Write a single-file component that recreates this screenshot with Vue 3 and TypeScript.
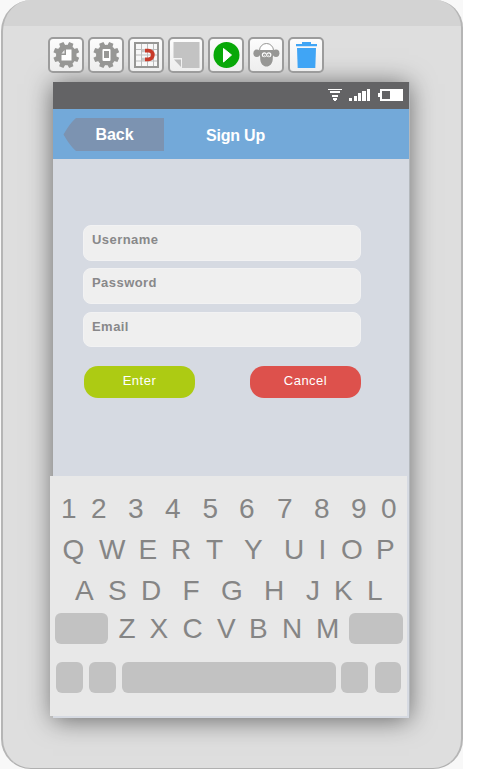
<script setup lang="ts">
interface KeyRow {
  name: string
  keys: string
  // left edge of every key, measured from the keyboard's left side
  starts: number[]
}

const tools: string[] = ['page', 'device', 'grid', 'note', 'play', 'monkey', 'trash']
const teeth: number[] = [0, 45, 90, 135, 180, 225, 270, 315]
const fields: string[] = ['Username', 'Password', 'Email']

const rows: KeyRow[] = [
  { name: 'digits', keys: '1234567890', starts: [11, 41, 78, 115, 152.5, 189, 227, 264, 301, 331] },
  { name: 'upper', keys: 'QWERTYUIOP', starts: [12.5, 49, 88.5, 121, 156, 194, 234, 268.5, 291, 326] },
  { name: 'home', keys: 'ASDFGHJKL', starts: [25, 58, 91, 132.5, 171, 214, 256, 284, 317] },
]
const lower: KeyRow = { name: 'lower', keys: 'ZXCVBNM', starts: [10.5, 41.5, 74.5, 109, 141, 174, 208] }

function columns(row: KeyRow): string {
  return row.starts
    .map((start, i) => (i + 1 < row.starts.length ? `${row.starts[i + 1] - start}px` : '28px'))
    .join(' ')
}

function rowStyle(row: KeyRow) {
  return { gridTemplateColumns: columns(row), paddingLeft: `${row.starts[0]}px` }
}
</script>

<template>
  <div class="stage">
    <div class="device">
      <div class="toolbar">
        <button v-for="tool in tools" :key="tool" class="tool" type="button">
          <svg width="36" height="36" viewBox="0 0 36 36">
            <g v-if="tool === 'page' || tool === 'device'">
              <g fill="#979795">
                <circle cx="17.3" cy="18" r="10.3" />
                <path v-for="angle in teeth" :key="angle" d="M14.5 9.5L15 5H19.6L20.1 9.5Z" :transform="`rotate(${angle + 22.5} 17.3 18)`" />
              </g>
              <g v-if="tool === 'page'">
                <path d="M17 12.5H22.5V23.5H12.5V18H17Z" fill="#fff" />
                <path d="M12.5 16.5L15.5 13V16.5Z" fill="#eee" />
              </g>
              <g v-else>
                <rect x="13.5" y="12" width="8" height="12" rx="1" fill="#fff" />
                <rect x="15" y="14" width="5" height="7" fill="#979795" />
              </g>
            </g>
            <g v-else-if="tool === 'grid'">
              <rect x="6" y="6" width="23" height="24" fill="#f8f8f8" stroke="#979795" stroke-width="2" />
              <path d="M12.5 7V29M18.5 7V29M24.5 7V29M7 12.5H28M7 18H28M7 24H28" stroke="#bcbcbc" stroke-width="1" />
              <path d="M13 13.7H16.5M13 22.3H16.5" stroke="#c8c8c8" stroke-width="3" />
              <path d="M16 13.7H19.5A4.3 4.3 0 0 1 19.5 22.3H16" fill="none" stroke="#c83a29" stroke-width="3.8" />
            </g>
            <g v-else-if="tool === 'note'">
              <path d="M4.5 5H30.5V31H13V21H4.5Z" fill="#c3c3c3" />
              <path d="M5 22.5H12V30Z" fill="#bdbdbd" />
            </g>
            <g v-else-if="tool === 'play'">
              <circle cx="17.5" cy="18" r="13" fill="#08a808" />
              <path d="M14.5 11.5L22.5 18L14.5 25Z" fill="#fff" stroke="#fff" stroke-linejoin="round" />
            </g>
            <g v-else-if="tool === 'monkey'">
              <path d="M10.5 13.5A7 7 0 0 1 24.5 13.5Z" fill="#fff" stroke="#979795" />
              <ellipse cx="7.8" cy="16.3" rx="3.4" ry="3.7" fill="#979795" />
              <ellipse cx="27" cy="16.3" rx="3.4" ry="3.7" fill="#979795" />
              <path d="M9.8 13.5H25.2L23.8 20C24.2 27 20.5 29.5 17.5 29.5S10.8 27 11.2 20Z" fill="#979795" />
              <circle cx="15.3" cy="17.7" r="2.5" fill="#fff" />
              <circle cx="19.9" cy="17.7" r="2.5" fill="#fff" />
              <circle cx="15.5" cy="18" r="1.5" fill="#979795" />
              <circle cx="19.7" cy="18" r="1.5" fill="#979795" />
              <circle cx="15.6" cy="18.2" r=".5" fill="#fff" />
              <circle cx="19.7" cy="18.2" r=".5" fill="#fff" />
            </g>
            <g v-else fill="#40a5f5">
              <path d="M13 5H22V7H28V9.3H7V7H13Z" />
              <path d="M8 11H27L26.3 31H8.7Z" />
            </g>
          </svg>
        </button>
      </div>

      <div class="screen">
        <div class="status">
          <svg width="77" height="14" viewBox="0 0 77 14" fill="#fff" shape-rendering="crispEdges">
            <path d="M0 1H14V2H0ZM2 3H12V5H2ZM4 7H10V9H4ZM5 10H9V12H5Z" />
            <path d="M6 12H8V13H6Z" />
            <path d="M21 10H24V13H21ZM26 8H29V13H26ZM30 5H33V13H30ZM34 3H38V13H34ZM39 1H42V13H39Z" />
            <path fill-rule="evenodd" d="M52 1H75V13H52V9H50V5H52ZM54 3V11H62V3Z" />
          </svg>
        </div>

        <header class="bar">
          <button class="back" type="button">
            <svg class="arrow" width="101" height="33" viewBox="0 0 101 33">
              <path d="M0.5 16.5Q7 5 13 0H101V33H13Q7 28 0.5 16.5Z" fill="#7c93b1" />
            </svg>
            <span class="back-label">Back</span>
          </button>
          <h1 class="title">Sign Up</h1>
        </header>

        <main class="form">
          <div v-for="field in fields" :key="field" class="field">{{ field }}</div>
          <div class="actions">
            <button class="action enter" type="button">Enter</button>
            <button class="action cancel" type="button">Cancel</button>
          </div>
        </main>

        <section class="keyboard">
          <div v-for="row in rows" :key="row.name" class="keys" :class="row.name" :style="rowStyle(row)">
            <span v-for="key in row.keys" :key="key">{{ key }}</span>
          </div>
          <div class="shift-row">
            <div class="pad shift" />
            <div class="keys lower" :style="rowStyle(lower)">
              <span v-for="key in lower.keys" :key="key">{{ key }}</span>
            </div>
            <div class="pad erase" />
          </div>
          <div class="space-row">
            <div class="pad" />
            <div class="pad" />
            <div class="pad" />
            <div class="pad" />
            <div class="pad" />
          </div>
        </section>
      </div>
    </div>
  </div>
</template>

<style>
body {
  background: #fff;
}
</style>

<style scoped>
.stage {
  width: 463px;
  height: 769px;
  box-sizing: border-box;
  padding-left: 1px;
  background: #f8f8f8;
  font-family: "Liberation Sans", Arial, sans-serif;
}

.device {
  width: 462px;
  height: 769px;
  box-sizing: border-box;
  border: 1px solid #b0b0b0;
  border-right: 2px solid #b5b5b5;
  border-left: 2px solid #b5b5b5;
  border-top: 0;
  border-radius: 31px 28px 30px 30px;
  background: linear-gradient(#d3d3d3 26px, #dedede 26px);
  padding: 37px 0 0 45px;
  overflow: hidden;
}

button {
  font: inherit;
  border: 0;
  padding: 0;
  margin: 0;
}

.toolbar {
  display: flex;
  gap: 4px;
  padding-left: 0.4px;
}

.tool {
  width: 36px;
  height: 36px;
  box-sizing: border-box;
  border: 2px solid #9c9c9c;
  border-radius: 5px;
  background: linear-gradient(#fcfcfc, #eeeeee);
}

.tool svg {
  display: block;
  margin: -2px -2px -2px -1.4px;
}

.screen {
  width: 356px;
  height: 636px;
  box-sizing: border-box;
  margin: 9px 0 0 5px;
  background: #d6dae2;
  box-shadow: 1px 0 0 #b5b9bd, 0 2px 24px rgba(0, 0, 0, 0.55);
}

.status {
  height: 27px;
  display: flex;
  justify-content: flex-end;
  padding: 6px 4px 0 0;
  box-sizing: border-box;
  background: #636365;
}

.bar {
  height: 50px;
  box-sizing: border-box;
  display: flex;
  padding: 9px 0 0 10px;
  background: #73a9d9;
  color: #fff;
}

.back {
  display: grid;
  width: 101px;
  height: 33px;
  background: none;
  color: #fff;
  font-size: 16px;
  font-weight: bold;
}

.arrow,
.back-label {
  grid-area: 1 / 1;
}

.back-label {
  line-height: 33px;
  padding-left: 2px;
}

.title {
  margin: 0 0 0 42px;
  font-size: 16px;
  line-height: 35px;
  font-weight: bold;
  letter-spacing: -0.2px;
}

.form {
  height: 317px;
  box-sizing: border-box;
  padding: 66px 48px 0 30px;
}

.field {
  height: 36px;
  box-sizing: border-box;
  margin-bottom: 7px;
  padding: 6px 8px;
  border-radius: 8px;
  border: 1px solid #f2f2f3;
  background: #efefef;
  color: #88888a;
  font-size: 13px;
  line-height: 16px;
  font-weight: bold;
  letter-spacing: 0.45px;
}

.field:nth-child(3) {
  height: 35px;
  margin-top: 8px;
}

.actions {
  display: flex;
  justify-content: space-between;
  padding: 12px 0 0 1px;
}

.action {
  width: 111px;
  height: 32px;
  padding-bottom: 2px;
  border-radius: 14px;
  color: #fff;
  font-size: 13px;
  line-height: 30px;
  letter-spacing: 0.5px;
}

.enter {
  background: #adcb13;
}

.cancel {
  background: #dd514c;
}

.keyboard {
  width: 357px;
  height: 240px;
  box-sizing: border-box;
  margin-left: -3px;
  padding-top: 17px;
  background: #e8e8e8;
  color: #858585;
}

.keys {
  display: grid;
  height: 41px;
  font-size: 28px;
  line-height: 32px;
  white-space: nowrap;
}

.home {
  height: 38px;
}

.shift-row {
  display: flex;
  height: 49px;
  padding-left: 5px;
}

.lower {
  width: 241px;
  box-sizing: border-box;
  line-height: 31px;
}

.pad {
  height: 31px;
  border-radius: 6px;
  background: #c2c2c2;
}

.shift {
  width: 53px;
}

.erase {
  width: 54px;
}

.space-row {
  display: grid;
  grid-template-columns: 27px 27px 214px 27px 26px;
  column-gap: 6px;
  padding-left: 6px;
}

.space-row .pad:nth-child(4) {
  margin: 0 1px 0 -1px;
  width: 27px;
}
</style>
